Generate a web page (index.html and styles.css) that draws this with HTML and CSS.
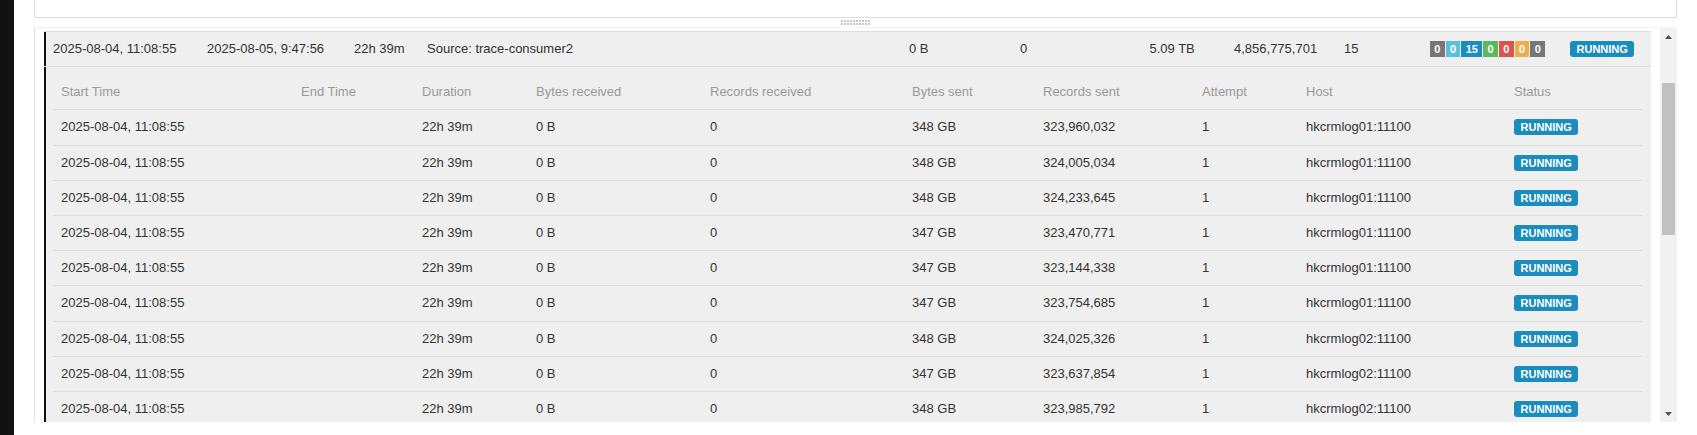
FILE: index.html
```html
<!DOCTYPE html>
<html lang="en">
<head>
<meta charset="utf-8">
<title>Job vertices</title>
<link rel="stylesheet" href="styles.css">
</head>
<body>
<div class="page">
  <div class="rail"></div>
  <div class="main">
    <div class="top-panel"></div>
    <div class="resizer">
      <svg width="29" height="5" viewBox="0 0 29 5" aria-hidden="true">
        <defs><pattern id="dots" width="3" height="3" patternUnits="userSpaceOnUse"><rect width="2" height="2" fill="#c8c8c8"/></pattern></defs>
        <rect width="29" height="5" fill="url(#dots)"/>
      </svg>
    </div>
    <div class="scroll-panel">
      <div class="scroll-content">
        <div class="job">
          <div class="summary">
            <span class="cell">2025-08-04, 11:08:55</span>
            <span class="cell">2025-08-05, 9:47:56</span>
            <span class="cell">22h 39m</span>
            <span class="cell">Source: trace-consumer2</span>
            <span class="cell">0 B</span>
            <span class="cell">0</span>
            <span class="cell">5.09 TB</span>
            <span class="cell">4,856,775,701</span>
            <span class="cell">15</span>
            <span class="cell badge-cell">
              <span class="counts">
                <i class="cnt c-gray">0</i><i class="cnt c-light">0</i><i class="cnt c-blue">15</i><i class="cnt c-green">0</i><i class="cnt c-red">0</i><i class="cnt c-orange">0</i><i class="cnt c-gray">0</i>
              </span>
            </span>
            <span class="cell badge-cell"><b class="label">RUNNING</b></span>
          </div>
          <div class="detail">
            <div class="sub-row sub-head">
              <span class="cell">Start Time</span>
              <span class="cell">End Time</span>
              <span class="cell">Duration</span>
              <span class="cell">Bytes received</span>
              <span class="cell">Records received</span>
              <span class="cell">Bytes sent</span>
              <span class="cell">Records sent</span>
              <span class="cell">Attempt</span>
              <span class="cell">Host</span>
              <span class="cell">Status</span>
            </div>
            <div class="sub-row">
              <span class="cell">2025-08-04, 11:08:55</span><span class="cell"></span><span class="cell">22h 39m</span><span class="cell">0 B</span><span class="cell">0</span><span class="cell">348 GB</span><span class="cell">323,960,032</span><span class="cell">1</span><span class="cell">hkcrmlog01:11100</span><span class="cell badge-cell"><b class="label">RUNNING</b></span>
            </div>
            <div class="sub-row">
              <span class="cell">2025-08-04, 11:08:55</span><span class="cell"></span><span class="cell">22h 39m</span><span class="cell">0 B</span><span class="cell">0</span><span class="cell">348 GB</span><span class="cell">324,005,034</span><span class="cell">1</span><span class="cell">hkcrmlog01:11100</span><span class="cell badge-cell"><b class="label">RUNNING</b></span>
            </div>
            <div class="sub-row">
              <span class="cell">2025-08-04, 11:08:55</span><span class="cell"></span><span class="cell">22h 39m</span><span class="cell">0 B</span><span class="cell">0</span><span class="cell">348 GB</span><span class="cell">324,233,645</span><span class="cell">1</span><span class="cell">hkcrmlog01:11100</span><span class="cell badge-cell"><b class="label">RUNNING</b></span>
            </div>
            <div class="sub-row">
              <span class="cell">2025-08-04, 11:08:55</span><span class="cell"></span><span class="cell">22h 39m</span><span class="cell">0 B</span><span class="cell">0</span><span class="cell">347 GB</span><span class="cell">323,470,771</span><span class="cell">1</span><span class="cell">hkcrmlog01:11100</span><span class="cell badge-cell"><b class="label">RUNNING</b></span>
            </div>
            <div class="sub-row">
              <span class="cell">2025-08-04, 11:08:55</span><span class="cell"></span><span class="cell">22h 39m</span><span class="cell">0 B</span><span class="cell">0</span><span class="cell">347 GB</span><span class="cell">323,144,338</span><span class="cell">1</span><span class="cell">hkcrmlog01:11100</span><span class="cell badge-cell"><b class="label">RUNNING</b></span>
            </div>
            <div class="sub-row">
              <span class="cell">2025-08-04, 11:08:55</span><span class="cell"></span><span class="cell">22h 39m</span><span class="cell">0 B</span><span class="cell">0</span><span class="cell">347 GB</span><span class="cell">323,754,685</span><span class="cell">1</span><span class="cell">hkcrmlog01:11100</span><span class="cell badge-cell"><b class="label">RUNNING</b></span>
            </div>
            <div class="sub-row">
              <span class="cell">2025-08-04, 11:08:55</span><span class="cell"></span><span class="cell">22h 39m</span><span class="cell">0 B</span><span class="cell">0</span><span class="cell">348 GB</span><span class="cell">324,025,326</span><span class="cell">1</span><span class="cell">hkcrmlog02:11100</span><span class="cell badge-cell"><b class="label">RUNNING</b></span>
            </div>
            <div class="sub-row">
              <span class="cell">2025-08-04, 11:08:55</span><span class="cell"></span><span class="cell">22h 39m</span><span class="cell">0 B</span><span class="cell">0</span><span class="cell">347 GB</span><span class="cell">323,637,854</span><span class="cell">1</span><span class="cell">hkcrmlog02:11100</span><span class="cell badge-cell"><b class="label">RUNNING</b></span>
            </div>
            <div class="sub-row">
              <span class="cell">2025-08-04, 11:08:55</span><span class="cell"></span><span class="cell">22h 39m</span><span class="cell">0 B</span><span class="cell">0</span><span class="cell">348 GB</span><span class="cell">323,985,792</span><span class="cell">1</span><span class="cell">hkcrmlog02:11100</span><span class="cell badge-cell"><b class="label">RUNNING</b></span>
            </div>
          </div>
        </div>
      </div>
      <div class="scrollbar">
        <div class="sb-btn">
          <svg width="7" height="4" viewBox="0 0 7 4" aria-hidden="true"><polygon points="0,4 7,4 3.5,0" fill="#505050"/></svg>
        </div>
        <div class="sb-track"><div class="sb-thumb"></div></div>
        <div class="sb-btn">
          <svg width="7" height="4" viewBox="0 0 7 4" aria-hidden="true"><polygon points="0,0 7,0 3.5,4" fill="#505050"/></svg>
        </div>
      </div>
    </div>
  </div>
</div>
</body>
</html>
```

FILE: styles.css
```css
* { box-sizing: border-box; }

html, body {
  margin: 0;
  padding: 0;
  background: #fff;
}

body {
  font-family: "Liberation Sans", Arial, sans-serif;
  font-size: 13px;
  color: #333;
}

.page {
  display: flex;
  height: 435px;
  overflow: hidden;
}

.rail {
  flex: none;
  width: 14px;
  background: #121212;
}

.main {
  flex: 1;
  min-width: 0;
  padding: 0 20px;
  display: flex;
  flex-direction: column;
}

.top-panel {
  flex: none;
  height: 18px;
  border: 1px solid #ddd;
  border-top: 0;
  background: #fff;
}

.resizer {
  flex: none;
  height: 9px;
  display: flex;
  justify-content: center;
  align-items: center;
}

.resizer svg { display: block; }

.scroll-panel {
  flex: none;
  height: 395px;
  display: flex;
  border-top: 1px solid #f3f3f3;
  border-left: 1px solid #e3e3e3;
}

.scroll-content {
  flex: 1;
  min-width: 0;
  padding: 3px 9px 0;
  overflow: hidden;
}

.job {
  border-top: 1px solid #ddd;
  background: #efefef;
}

.cell {
  display: flex;
  align-items: center;
  padding: 8px;
  line-height: 1.4;
  min-height: 34.2px;
  white-space: nowrap;
}

.summary {
  display: grid;
  grid-template-columns: 154px 147px 73px 482px 111px 129.5px 84.5px 110px 86px 140px 88px;
  padding-left: 2px;
  box-shadow: inset 2px 0 #111;
  border-bottom: 1px solid #ddd;
}

.summary .cell {
  padding-left: 7px;
  padding-right: 7px;
}

.detail {
  box-shadow: inset 2px 0 #111;
  padding: 8px 9px 0 9px;
}

.sub-row {
  display: grid;
  grid-template-columns: 240px 121px 114px 174px 202px 131px 159px 104px 208px 136px;
  border-bottom: 1px solid #ddd;
}

.sub-head .cell {
  color: #999;
}

.label {
  display: inline-block;
  background: #1a8cbe;
  color: #fff;
  font-size: 11px;
  font-weight: bold;
  line-height: 16px;
  height: 16px;
  padding: 0 6.5px;
  border-radius: 3px;
}

.counts {
  display: inline-flex;
  gap: 1px;
}

.cnt {
  display: inline-block;
  font-style: normal;
  font-weight: bold;
  font-size: 11px;
  color: #fff;
  height: 16px;
  line-height: 16px;
  padding: 0 4.3px;
}

.c-gray { background: #777; }
.c-light { background: #5bc0de; }
.c-blue { background: #1a8cbe; }
.c-green { background: #5cb85c; }
.c-red { background: #d9534f; }
.c-orange { background: #f0ad4e; }

.scrollbar {
  flex: none;
  width: 17px;
  background: #f1f1f1;
  display: flex;
  flex-direction: column;
}

.sb-btn {
  flex: none;
  height: 17px;
  display: flex;
  align-items: center;
  justify-content: center;
}

.sb-btn svg { display: block; }

.sb-track {
  flex: 1;
  padding: 38px 2px 0;
}

.sb-thumb {
  height: 152px;
  background: #c1c1c1;
}
```
